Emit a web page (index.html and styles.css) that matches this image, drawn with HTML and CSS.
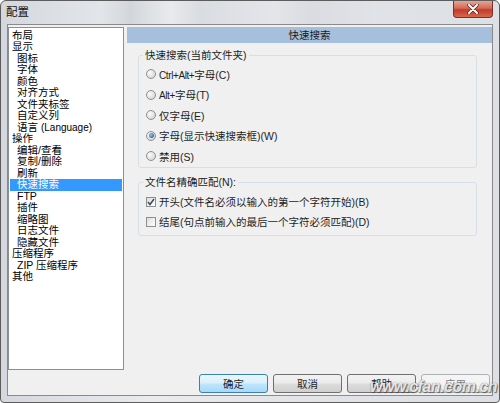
FILE: index.html
```html
<!DOCTYPE html>
<html lang="zh-CN">
<head>
  <meta charset="UTF-8" />
  <title>配置</title>
  <link rel="stylesheet" href="styles.css">
</head>
<body>

  <div class="window">
    <div class="titlebar">
      <span class="title">配置</span>
      <button class="close-btn" aria-label="关闭">
        <svg width="12" height="10" viewBox="0 0 12 10">
          <path d="M2 1 L10 9 M10 1 L2 9" stroke="#5a1d18" stroke-width="3.4" stroke-linecap="round"/>
          <path d="M2 1 L10 9 M10 1 L2 9" stroke="#fff" stroke-width="2" stroke-linecap="round"/>
        </svg>
      </button>
    </div>

    <div class="client">
      <div class="main">
        <ul class="tree">
          <li>布局</li>
          <li>显示</li>
          <li class="sub">图标</li>
          <li class="sub">字体</li>
          <li class="sub">颜色</li>
          <li class="sub">对齐方式</li>
          <li class="sub">文件夹标签</li>
          <li class="sub">自定义列</li>
          <li class="sub">语言 <span class="latin">(Language)</span></li>
          <li>操作</li>
          <li class="sub">编辑/查看</li>
          <li class="sub">复制/删除</li>
          <li class="sub">刷新</li>
          <li class="sub selected">快速搜索</li>
          <li class="sub">FTP</li>
          <li class="sub">插件</li>
          <li class="sub">缩略图</li>
          <li class="sub">日志文件</li>
          <li class="sub">隐藏文件</li>
          <li>压缩程序</li>
          <li class="sub">ZIP 压缩程序</li>
          <li>其他</li>
        </ul>

        <div class="panel">
          <div class="panel-header">快速搜索</div>

          <fieldset class="group group-search">
            <legend>快速搜索(当前文件夹)</legend>
            <div class="rows">
              <label class="row"><span class="radio"></span><span><span class="key">Ctrl+Alt+</span>字母(C)</span></label>
              <label class="row"><span class="radio"></span><span><span class="key">Alt+</span>字母(T)</span></label>
              <label class="row"><span class="radio"></span>仅字母(E)</label>
              <label class="row"><span class="radio checked"></span>字母(显示快速搜索框)(W)</label>
              <label class="row"><span class="radio"></span>禁用(S)</label>
            </div>
          </fieldset>

          <fieldset class="group group-match">
            <legend>文件名精确匹配(N):</legend>
            <div class="rows">
              <label class="row">
                <span class="checkbox">
                  <svg width="8" height="8" viewBox="0 0 8 8"><path d="M1 4 L3 6.5 L7 1" fill="none" stroke="#3d4a63" stroke-width="1.5"/></svg>
                </span>开头(文件名必须以输入的第一个字符开始)(B)
              </label>
              <label class="row"><span class="checkbox"></span>结尾(句点前输入的最后一个字符必须匹配)(D)</label>
            </div>
          </fieldset>
        </div>
      </div>

      <div class="buttons">
        <button class="btn default">确定</button>
        <button class="btn">取消</button>
        <button class="btn">帮助</button>
        <button class="btn" disabled>应用</button>
      </div>
    </div>

    <div class="watermark">www.cfan.com.cn</div>
  </div>

</body>
</html>
```

FILE: styles.css
```css
body {
  margin: 0;
  padding: 0;
  font-family: "Liberation Sans", "Noto Sans CJK SC", sans-serif;
  font-size: 10.5px;
  color: #1e1e1e;
  background: #fff;
}

.window {
  position: relative;
  width: 500px;
  height: 403px;
  box-sizing: border-box;
  border: 1px solid #5c5c5c;
  border-radius: 6px 6px 4px 4px;
  background: linear-gradient(90deg, #d4d8de, #e9ebee 30%, #e2e4e8 60%, #dcdfe4);
  display: flex;
  flex-direction: column;
  overflow: hidden;
}

.titlebar {
  height: 23px;
  display: flex;
  justify-content: space-between;
  align-items: flex-start;
  padding: 0 6px 0 5px;
  background: linear-gradient(90deg, transparent 20%, rgba(190, 194, 200, 0.5) 26%, transparent 34%, rgba(200, 204, 210, 0.45) 40%, transparent 55%, rgba(205, 208, 214, 0.4) 62%, transparent 75%);
}

.title {
  font-size: 11.5px;
  line-height: 23px;
  color: #111;
}

.close-btn {
  width: 40px;
  height: 17px;
  padding: 0;
  border: 1px solid #7a2f29;
  border-top: none;
  border-radius: 0 0 4px 4px;
  background: linear-gradient(#e6a595, #d46a55 45%, #c23a2c 55%, #d6684c);
  display: flex;
  align-items: center;
  justify-content: center;
}

.client {
  flex: 1;
  margin: 0 6px 6px 6px;
  border: 1px solid #8a8a8a;
  background: #f0f0f0;
  padding: 2px 2px 2px 0;
  display: flex;
  flex-direction: column;
}

.main {
  flex: 1;
  display: flex;
  gap: 3px;
  min-height: 0;
}

.tree {
  width: 116px;
  box-sizing: border-box;
  margin: 0;
  padding: 1.5px 0 0;
  list-style: none;
  background: #fff;
  border: 1px solid #8b8f96;
  line-height: 11.5px;
  color: #000;
}

.tree li {
  padding-left: 2px;
  margin: 0 1px;
  white-space: nowrap;
}

.tree li.sub {
  padding-left: 7px;
}

.tree li.selected {
  background: #3399ff;
  color: #fff;
}

.tree .latin {
  font-size: 10px;
}

.panel {
  flex: 1;
  margin-right: -2px;
}

.panel-header {
  height: 16px;
  line-height: 16px;
  text-align: center;
  background: #a5bfdc;
  color: #1a1a1a;
}

.group {
  margin: 6px 15px 0 11px;
  padding: 0 7px 0 7px;
  border: 1px solid #d5dfe5;
  border-radius: 3px;
}

.group legend {
  padding: 0 2px;
  margin-left: -3px;
  line-height: 13px;
}

.group-search .rows {
  padding-top: 2px;
}

.group-search .row {
  height: 20.5px;
}

.group-match {
  margin-top: 8px;
  padding-bottom: 3px;
}

.group-match .rows {
  padding-top: 3px;
}

.group-match .row {
  height: 20px;
}

.row {
  display: flex;
  align-items: center;
  gap: 3px;
  white-space: nowrap;
}

.key {
  font-size: 10px;
  letter-spacing: -0.4px;
}

.radio {
  width: 10px;
  height: 10px;
  box-sizing: border-box;
  border: 1px solid #8e8f8f;
  border-radius: 50%;
  background: radial-gradient(circle at 35% 35%, #fbfbfb, #d6d6d6 80%);
  display: flex;
  align-items: center;
  justify-content: center;
}

.radio.checked::after {
  content: "";
  width: 5px;
  height: 5px;
  border-radius: 50%;
  background: radial-gradient(circle at 40% 40%, #8cc8f2, #2b6ca6 75%);
}

.checkbox {
  width: 10px;
  height: 10px;
  box-sizing: border-box;
  border: 1px solid #8e8f8f;
  background: linear-gradient(135deg, #dcdcdc, #ffffff);
  display: flex;
  align-items: center;
  justify-content: center;
}

.buttons {
  display: flex;
  justify-content: flex-end;
  gap: 5px;
  margin-top: 4px;
}

.btn {
  width: 69px;
  height: 19px;
  padding: 0;
  font-family: "Noto Sans CJK SC", sans-serif;
  font-size: 10.5px;
  line-height: 17px;
  color: #1e1e1e;
  border: 1px solid #707070;
  border-radius: 3px;
  background: linear-gradient(#f2f2f2, #ebebeb 48%, #dddddd 52%, #cfcfcf);
}

.btn.default {
  border-color: #3c7fb1;
  background: linear-gradient(#eaf6fd, #d9f0fc 48%, #bee6fd 52%, #a7d9f5);
}

.btn:disabled {
  border-color: #adb2b5;
  background: #f4f4f4;
  color: #838383;
}

.watermark {
  position: absolute;
  right: 2px;
  bottom: 6px;
  font-family: "Liberation Sans", sans-serif;
  font-size: 16px;
  font-weight: bold;
  font-style: italic;
  letter-spacing: -0.5px;
  color: rgba(255, 255, 255, 0.85);
  text-shadow: 0 0 1px #555, 1px 1px 1px rgba(60, 60, 60, 0.7);
}
```
